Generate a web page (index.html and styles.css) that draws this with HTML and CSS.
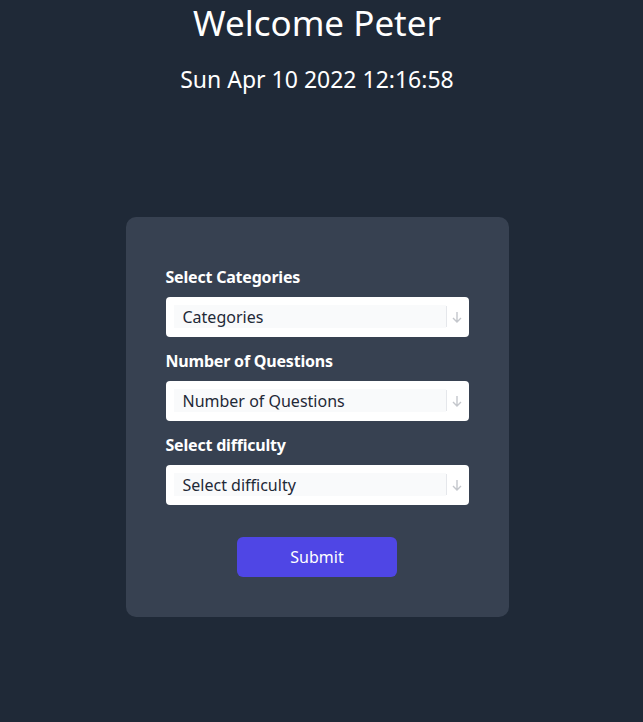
FILE: index.html
```html
<!DOCTYPE html>
<html>
<head>
<meta charset="utf-8">
<link rel="stylesheet" href="styles.css">
</head>
<body>
<main class="page">
  <h1 class="title">Welcome Peter</h1>
  <p class="date">Sun Apr 10 2022 12:16:58</p>
  <form class="card">
    <label class="label">Select Categories</label>
    <div class="select">
      <div class="select-inner"><span>Categories</span></div>
      <span class="sep"></span>
      <svg class="arrow" width="10" height="12" viewBox="0 0 10 12"><path d="M5 1v10M1 7l4 4 4-4" fill="none" stroke="#c4c7cc" stroke-width="1.4"/></svg>
    </div>
    <label class="label">Number of Questions</label>
    <div class="select">
      <div class="select-inner"><span>Number of Questions</span></div>
      <span class="sep"></span>
      <svg class="arrow" width="10" height="12" viewBox="0 0 10 12"><path d="M5 1v10M1 7l4 4 4-4" fill="none" stroke="#c4c7cc" stroke-width="1.4"/></svg>
    </div>
    <label class="label">Select difficulty</label>
    <div class="select">
      <div class="select-inner"><span>Select difficulty</span></div>
      <span class="sep"></span>
      <svg class="arrow" width="10" height="12" viewBox="0 0 10 12"><path d="M5 1v10M1 7l4 4 4-4" fill="none" stroke="#c4c7cc" stroke-width="1.4"/></svg>
    </div>
    <div class="actions"><button type="button" class="btn">Submit</button></div>
  </form>
</main>
</body>
</html>
```
FILE: styles.css
```css
html, body { margin: 0; background: #1f2937; height: 100%; }
body { font-family: "Noto Sans", "Open Sans", sans-serif; color: #fff; }
.page { display: flex; flex-direction: column; align-items: center; padding-right: 9px; }
.title { margin: 3px 0 0; font-size: 35px; line-height: 40px; font-weight: 400; }
.date { margin: 20px 0 0; font-size: 23px; line-height: 32px; }
.card { margin-top: 122px; width: 303px; padding: 48px 40px 40px; background: #374151; border-radius: 10px; display: flex; flex-direction: column; }
.label { font-weight: 700; font-size: 16px; line-height: 24px; margin-bottom: 8px; letter-spacing: -0.2px; }
.select { height: 40px; box-sizing: border-box; background: #fff; border-radius: 4px; display: flex; align-items: center; padding: 8px 0 9px 8px; margin-bottom: 12px; }
.select-inner { flex: 1; height: 23px; background: #f9fafb; display: flex; align-items: center; padding-left: 9px; color: #1f2937; font-size: 16px; }
.sep { width: 1px; height: 21px; background: #e5e7eb; margin-right: 5px; }
.arrow { margin-right: 7px; }
.actions { display: flex; justify-content: center; margin-top: 20px; }
.btn { width: 160px; height: 40px; border: 0; border-radius: 6px; background: #4f46e5; color: #fff; font-family: inherit; font-size: 16px; }
```
